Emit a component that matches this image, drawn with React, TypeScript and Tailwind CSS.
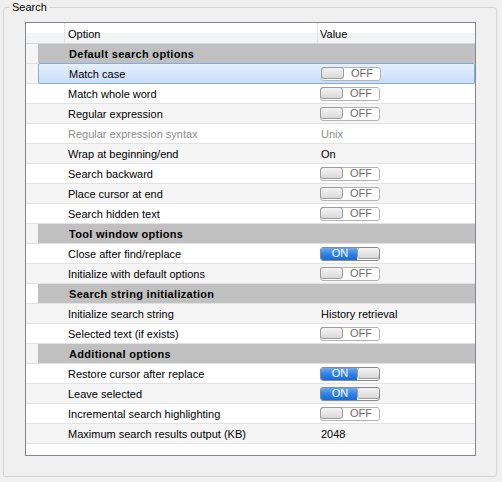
import React from "react";

type Row =
  | { kind: "cat"; label: string }
  | { kind: "toggle"; label: string; on: boolean; selected?: boolean }
  | { kind: "text"; label: string; value: string; disabled?: boolean };

const rows: Row[] = [
  { kind: "cat", label: "Default search options" },
  { kind: "toggle", label: "Match case", on: false, selected: true },
  { kind: "toggle", label: "Match whole word", on: false },
  { kind: "toggle", label: "Regular expression", on: false },
  { kind: "text", label: "Regular expression syntax", value: "Unix", disabled: true },
  { kind: "text", label: "Wrap at beginning/end", value: "On" },
  { kind: "toggle", label: "Search backward", on: false },
  { kind: "toggle", label: "Place cursor at end", on: false },
  { kind: "toggle", label: "Search hidden text", on: false },
  { kind: "cat", label: "Tool window options" },
  { kind: "toggle", label: "Close after find/replace", on: true },
  { kind: "toggle", label: "Initialize with default options", on: false },
  { kind: "cat", label: "Search string initialization" },
  { kind: "text", label: "Initialize search string", value: "History retrieval" },
  { kind: "toggle", label: "Selected text (if exists)", on: false },
  { kind: "cat", label: "Additional options" },
  { kind: "toggle", label: "Restore cursor after replace", on: true },
  { kind: "toggle", label: "Leave selected", on: true },
  { kind: "toggle", label: "Incremental search highlighting", on: false },
  { kind: "text", label: "Maximum search results output (KB)", value: "2048" },
];

const font = { fontFamily: '"Liberation Sans", Arial, sans-serif' };

function Toggle({ on }: { on: boolean }) {
  const knob =
    "h-full w-[23px] rounded-[3px] border border-[#9c9c9c] bg-gradient-to-b from-[#f4f4f4] to-[#d9d9d9]";
  if (on) {
    return (
      <div className="flex h-[14px] w-[60px] items-stretch overflow-hidden rounded-[3px] border border-[#8a8a8a] bg-white">
        <div className="flex flex-1 items-center justify-center bg-gradient-to-b from-[#6aaaf2] via-[#2f82e6] to-[#1a6ad4] pl-[2px] text-[11px] leading-none text-white">
          ON
        </div>
        <div className={knob + " -my-px -mr-px"} />
      </div>
    );
  }
  return (
    <div className="flex h-[14px] w-[60px] items-stretch rounded-[3px] border border-[#b4b4b4] bg-white">
      <div className={knob + " -my-px -ml-px"} />
      <div className="flex flex-1 items-center justify-center text-[11px] leading-none text-[#6a6a6a]">OFF</div>
    </div>
  );
}

export default function App() {
  return (
    <div className="relative h-[482px] w-[502px] overflow-hidden bg-[#f0f0f0] text-black" style={font}>
      <div className="relative ml-[3px] mt-[7px] h-[470px] w-[494px] rounded-[3px] border border-[#d5d5d5] pl-[21px] pt-[14px]">
        <span className="absolute left-[6px] top-[-8px] bg-[#f0f0f0] px-[2px] text-[11px] leading-[14px]">Search</span>

        <div className="flex h-[434px] w-[451px] flex-col border border-[#828790] bg-white">
          {/* header */}
          <div className="flex h-[21px] shrink-0 border-b border-[#d5d5d5] bg-gradient-to-b from-white from-50% to-[#f3f4f6] to-50% pt-[2px] text-[11px]">
            <div className="-mt-[2px] w-[39px] border-r border-[#e3e3e3]" />
            <div className="-mt-[2px] flex w-[253px] items-center border-r border-[#e3e3e3] pl-[3px] pt-[2px]">Option</div>
            <div className="flex flex-1 items-center pl-[2px]">Value</div>
          </div>

          {rows.map((r, i) => {
            const zebra = i % 2 === 1 || i === 0 ? "bg-[#f5f5f5]" : "bg-white";
            return (
              <div key={i} className={`flex h-[20px] shrink-0 border-b border-[#e2e2e2] text-[11px] ${zebra}`}>
                <div className="w-[12px] shrink-0" />
                {r.kind === "cat" ? (
                  <div className="flex flex-1 items-center bg-[#c0c0c0] pl-[31px] pt-[2px] font-bold tracking-[0.3px]">
                    {r.label}
                  </div>
                ) : (
                  <div
                    className={
                      "flex flex-1 items-center " +
                      (r.kind === "toggle" && r.selected
                        ? "-mt-px h-[21px] rounded-[2px] border border-[#84acdd] bg-gradient-to-b from-[#e6f0fd] to-[#c9defa]"
                        : "")
                    }
                  >
                    <div
                      className={
                        "w-[282px] shrink-0 pl-[30px] pt-[2px] " +
                        (r.kind === "text" && r.disabled ? "text-[#8d8d8d]" : "")
                      }
                    >
                      {r.label}
                    </div>
                    {r.kind === "toggle" ? (
                      <Toggle on={r.on} />
                    ) : (
                      <div className={"pl-[1px] pt-[2px] " + (r.disabled ? "text-[#8d8d8d]" : "")}>{r.value}</div>
                    )}
                  </div>
                )}
              </div>
            );
          })}
          <div className="flex-1 bg-white" />
        </div>
      </div>
    </div>
  );
}
